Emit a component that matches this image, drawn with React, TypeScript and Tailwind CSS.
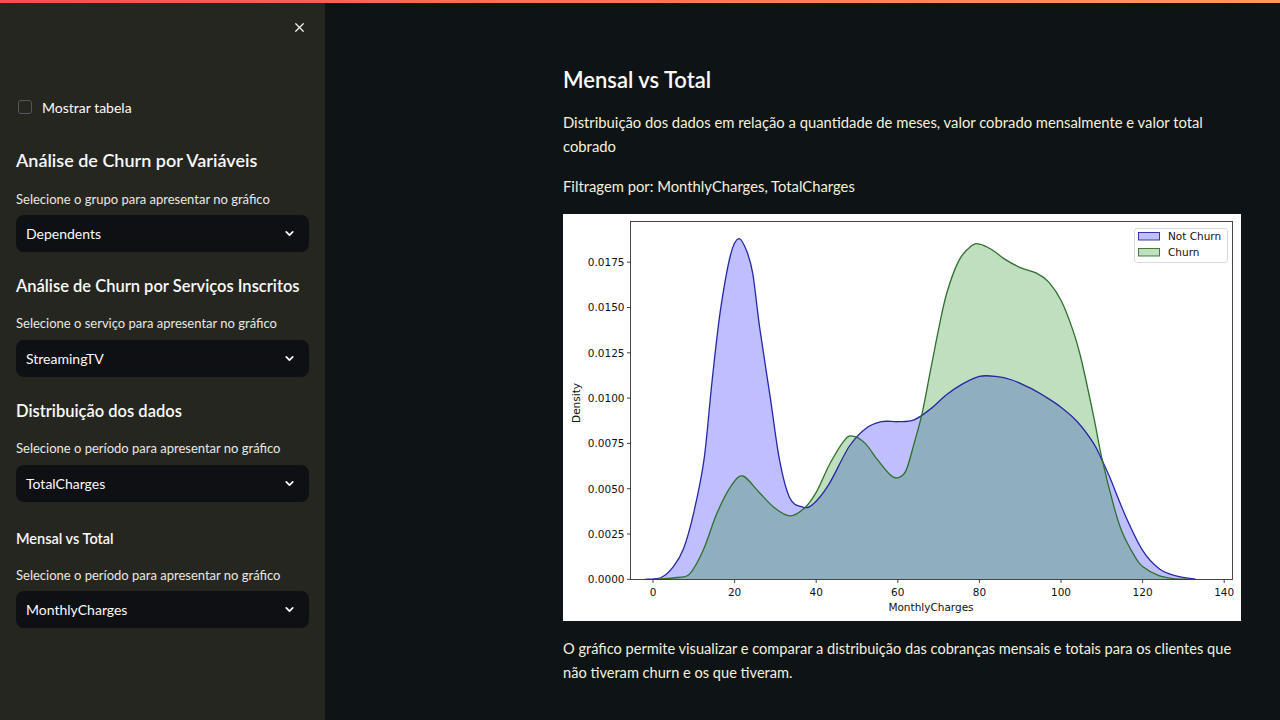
import React from 'react';
import { X, ChevronDown } from 'lucide-react';

type Pt = [number, number];

// chart geometry (local px inside the 678x407 figure)
const AX = { l: 67.5, t: 7.5, r: 669.5, b: 365.5 };
const sx = (v: number) => 90 + v * 4.08;
const sy = (d: number) => 365.3 - d * 18120;

const notChurn: Pt[] = [
  [-2, 0], [2, 0.0001], [5, 0.0007], [7.5, 0.0017], [10, 0.0037], [12.5, 0.0066], [14.5, 0.011],
  [16.5, 0.0148], [19, 0.0179], [21, 0.0188], [23, 0.0181], [24.5, 0.0168], [26.2, 0.0138], [28.7, 0.0101],
  [31, 0.0066], [33.5, 0.0045], [36.5, 0.004], [39, 0.0041], [43, 0.0052], [48, 0.0073], [52, 0.0083],
  [56, 0.0087], [60, 0.0087], [64, 0.0088], [68, 0.0094], [72, 0.0102], [76, 0.0108], [80, 0.0112],
  [84, 0.0112], [88, 0.011], [92, 0.0106], [96, 0.0101], [100, 0.0095], [104, 0.0087], [108, 0.0075],
  [110, 0.0066], [112, 0.0056], [116, 0.0034], [120, 0.0016], [124, 0.0006], [128, 0.0002], [133, 0],
];

const churn: Pt[] = [
  [1, 0], [6, 0.0001], [9, 0.0003], [12.3, 0.0016], [15.6, 0.0036], [19, 0.0051], [22, 0.0057],
  [26, 0.0048], [30, 0.0039], [33.6, 0.0035], [37, 0.0039], [40, 0.0048], [43.4, 0.0064], [47, 0.0077],
  [49, 0.0079], [52, 0.0075], [55, 0.0066], [58, 0.0058], [60, 0.0056], [62, 0.006], [64, 0.0075],
  [66, 0.0092], [68, 0.0115], [70, 0.0138], [72, 0.0158], [75, 0.0176], [78, 0.0184], [80, 0.0185],
  [83, 0.0182], [86, 0.0177], [90, 0.0172], [94, 0.0169], [97, 0.0164], [100, 0.0154], [103, 0.0137],
  [105, 0.0121], [108, 0.009], [110, 0.0067], [113, 0.004], [115, 0.0026], [118, 0.0013], [120, 0.0007],
  [124, 0.0002], [128, 0.00003], [131, 0],
];

function curve(pts: Pt[]) {
  const p = pts.map(([v, d]) => [sx(v), sy(d)]);
  let s = `M${p[0][0].toFixed(1)},${p[0][1].toFixed(1)}`;
  for (let i = 0; i < p.length - 1; i++) {
    const p0 = p[i - 1] || p[i];
    const p1 = p[i];
    const p2 = p[i + 1];
    const p3 = p[i + 2] || p2;
    const c1x = p1[0] + (p2[0] - p0[0]) / 6;
    const c1y = Math.min(AX.b, p1[1] + (p2[1] - p0[1]) / 6);
    const c2x = p2[0] - (p3[0] - p1[0]) / 6;
    const c2y = Math.min(AX.b, p2[1] - (p3[1] - p1[1]) / 6);
    s += ` C${c1x.toFixed(1)},${c1y.toFixed(1)} ${c2x.toFixed(1)},${c2y.toFixed(1)} ${p2[0].toFixed(1)},${p2[1].toFixed(1)}`;
  }
  return s;
}

function area(pts: Pt[]) {
  const first = sx(pts[0][0]);
  const last = sx(pts[pts.length - 1][0]);
  return `${curve(pts)} L${last.toFixed(1)},${sy(0)} L${first.toFixed(1)},${sy(0)} Z`;
}

function KdeChart() {
  const yTicks = [0, 0.0025, 0.005, 0.0075, 0.01, 0.0125, 0.015, 0.0175];
  const xTicks = [0, 20, 40, 60, 80, 100, 120, 140];
  const font = { fontFamily: '"DejaVu Sans", sans-serif' };
  return (
    <svg width="678" height="407" viewBox="0 0 678 407" className="block">
      <rect x="0" y="0" width="678" height="407" fill="#ffffff" />
      <path d={area(notChurn)} fill="rgba(0,0,255,0.25)" />
      <path d={area(churn)} fill="rgba(0,128,0,0.25)" />
      <path d={curve(notChurn)} fill="none" stroke="#2626a8" strokeWidth="1.3" />
      <path d={curve(churn)} fill="none" stroke="#2f6f2f" strokeWidth="1.3" />
      <rect x={AX.l} y={AX.t} width={AX.r - AX.l} height={AX.b - AX.t} fill="none" stroke="#333" strokeWidth="0.9" />
      {yTicks.map((t) => (
        <g key={t}>
          <line x1={AX.l - 3.5} x2={AX.l} y1={sy(t)} y2={sy(t)} stroke="#333" strokeWidth="0.9" />
          <text x={AX.l - 6} y={sy(t) + 3.8} textAnchor="end" fontSize="10.5" fill="#111" style={font}>
            {t.toFixed(4)}
          </text>
        </g>
      ))}
      {xTicks.map((t) => (
        <g key={t}>
          <line x1={sx(t)} x2={sx(t)} y1={AX.b} y2={AX.b + 3.5} stroke="#333" strokeWidth="0.9" />
          <text x={sx(t)} y={AX.b + 16} textAnchor="middle" fontSize="10.5" fill="#111" style={font}>
            {t}
          </text>
        </g>
      ))}
      <text x="368" y="397" textAnchor="middle" fontSize="10.5" fill="#111" style={font}>
        MonthlyCharges
      </text>
      <text x="17" y="189" textAnchor="middle" fontSize="10.5" fill="#111" transform="rotate(-90 17 189)" style={font}>
        Density
      </text>
      {/* legend */}
      <rect x="571.5" y="14.5" width="93" height="34" rx="2.5" fill="rgba(255,255,255,0.8)" stroke="#d6d6d6" strokeWidth="0.9" />
      <rect x="575.5" y="18.5" width="21" height="7.5" fill="rgba(0,0,255,0.25)" stroke="#2626a8" strokeWidth="0.9" />
      <rect x="575.5" y="34.5" width="21" height="7.5" fill="rgba(0,128,0,0.25)" stroke="#2f6f2f" strokeWidth="0.9" />
      <text x="605" y="26" fontSize="10.5" fill="#111" style={font}>Not Churn</text>
      <text x="605" y="42" fontSize="10.5" fill="#111" style={font}>Churn</text>
    </svg>
  );
}

function SelectBox({ value }: { value: string }) {
  return (
    <div className="flex h-[37px] items-center justify-between rounded-lg bg-[#0e1013] pl-[10px] pr-[13px] text-[14px] text-[#fafafa]">
      <span>{value}</span>
      <ChevronDown size={13} strokeWidth={3.2} className="text-[#fafafa]" />
    </div>
  );
}

function Sidebar() {
  return (
    <aside className="h-[720px] w-[325px] shrink-0 bg-[#262620] px-4 text-[#fafafa]">
      <div className="mt-[20px] flex h-[14px] justify-end pr-[2px]">
        <X size={15} strokeWidth={2} className="text-[#f2f2f2]" />
      </div>

      <label className="mt-[63px] flex h-[20px] items-center gap-[10px] text-[14px]">
        <span className="ml-[2px] h-[14px] w-[14px] rounded-[3px] border border-[#55565e]" />
        <span>Mostrar tabela</span>
      </label>

      <h3 className="mt-[30px] text-[18px] leading-[26px] font-semibold">Análise de Churn por Variáveis</h3>
      <p className="mt-[17px] text-[13px] leading-[18px] text-[#e8e8e4]">Selecione o grupo para apresentar no gráfico</p>
      <div className="mt-[7px]">
        <SelectBox value="Dependents" />
      </div>

      <h3 className="mt-[21px] text-[16.5px] leading-[26px] font-semibold">Análise de Churn por Serviços Inscritos</h3>
      <p className="mt-[15px] text-[13px] leading-[18px] text-[#e8e8e4]">Selecione o serviço para apresentar no gráfico</p>
      <div className="mt-[8px]">
        <SelectBox value="StreamingTV" />
      </div>

      <h3 className="mt-[21px] text-[16.5px] leading-[26px] font-semibold">Distribuição dos dados</h3>
      <p className="mt-[15px] text-[13px] leading-[18px] text-[#e8e8e4]">Selecione o período para apresentar no gráfico</p>
      <div className="mt-[8px]">
        <SelectBox value="TotalCharges" />
      </div>

      <h4 className="mt-[26px] text-[14.5px] leading-[22px] font-semibold">Mensal vs Total</h4>
      <p className="mt-[16px] text-[13px] leading-[18px] text-[#e8e8e4]">Selecione o período para apresentar no gráfico</p>
      <div className="mt-[7px]">
        <SelectBox value="MonthlyCharges" />
      </div>
    </aside>
  );
}

export default function App() {
  return (
    <div className="relative flex h-[720px] w-[1280px] overflow-hidden bg-[#0e1415] font-['Lato',sans-serif]">
      {/* streamlit header decoration */}
      <div className="absolute left-0 right-0 top-0 h-[3px] bg-gradient-to-r from-[#ff4b4b] to-[#ff9a60]" />

      <Sidebar />

      <main className="flex-1 pl-[238px] pr-[20px] pt-[65px] text-[#f4f1de]">
        <h1 className="text-[22px] leading-[30px] font-semibold text-[#fafafa]">Mensal vs Total</h1>
        <p className="mt-[15px] text-[14.8px] leading-[24px] whitespace-nowrap">
          Distribuição dos dados em relação a quantidade de meses, valor cobrado mensalmente e valor total
          <br />
          cobrado
        </p>
        <p className="mt-[16px] text-[14.8px] leading-[24px]">Filtragem por: MonthlyCharges, TotalCharges</p>
        <div className="mt-[16px] w-[678px]">
          <KdeChart />
        </div>
        <p className="mt-[16px] text-[14.6px] leading-[24px] whitespace-nowrap">
          O gráfico permite visualizar e comparar a distribuição das cobranças mensais e totais para os clientes que
          <br />
          não tiveram churn e os que tiveram.
        </p>
      </main>
    </div>
  );
}
